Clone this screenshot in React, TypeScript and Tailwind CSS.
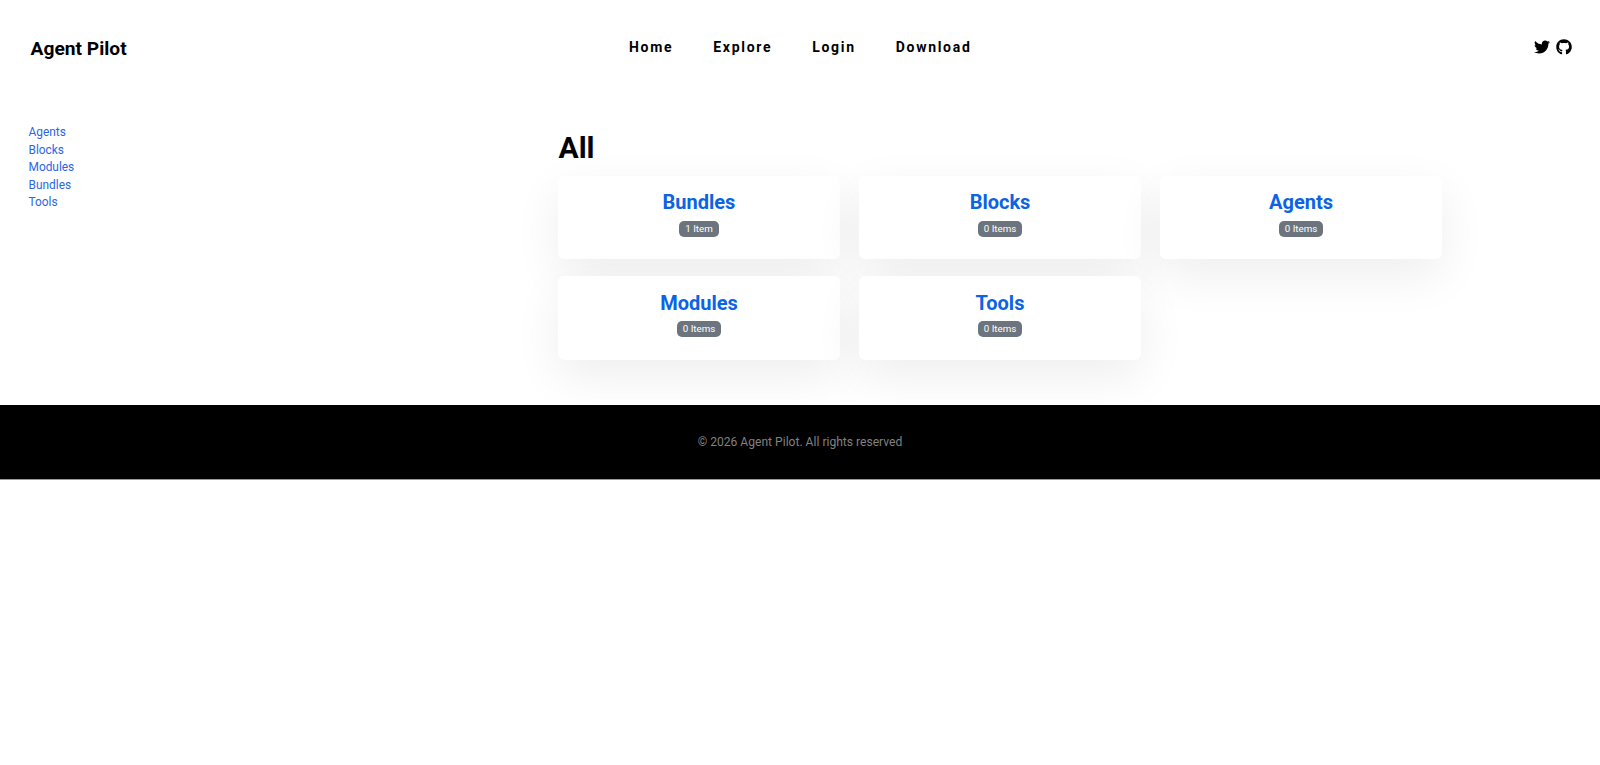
import React from 'react';
import { FaTwitter, FaGithub } from 'react-icons/fa';

const navLinks = ['Home', 'Explore', 'Login', 'Download'];
const sideLinks = ['Agents', 'Blocks', 'Modules', 'Bundles', 'Tools'];
const categories = [
  { name: 'Bundles', count: '1 Item' },
  { name: 'Blocks', count: '0 Items' },
  { name: 'Agents', count: '0 Items' },
  { name: 'Modules', count: '0 Items' },
  { name: 'Tools', count: '0 Items' },
];

const App: React.FC = () => {
  return (
    <div className="min-h-[765px] bg-white font-['Roboto',sans-serif] text-black">
      <header className="relative flex h-[95px] items-center justify-between pl-[30.6px] pr-[28px]">
        <a className="text-[19.2px] font-bold leading-[24px] mt-[2px]">Agent Pilot</a>
        <nav className="absolute left-[629px] top-[38px] flex gap-[40px]">
          {navLinks.map((link) => (
            <a key={link} className="text-[14px] font-bold leading-[18px] tracking-[1.7px]">
              {link}
            </a>
          ))}
        </nav>
        <div className="flex items-center gap-[6px] mt-[-2px]">
          <FaTwitter size={16} />
          <FaGithub size={16} />
        </div>
      </header>

      <div className="flex h-[310px]">
        <aside className="w-[558px] shrink-0 pl-[28.5px] pt-[29px]">
          {sideLinks.map((link) => (
            <a key={link} className="block text-[11.9px] leading-[17.5px] text-[#2b66e8]">
              {link}
            </a>
          ))}
        </aside>
        <main className="w-[884px] pt-[34px]">
          <h1 className="pl-[0.5px] text-[30px] font-bold leading-[38px] mb-[8.6px]">All</h1>
          <div className="grid grid-cols-3 gap-x-[19px] gap-y-[16.8px]">
            {categories.map((cat) => (
              <div
                key={cat.name}
                className="flex h-[83.7px] flex-col items-center rounded-[6px] bg-white pt-[13.6px] shadow-[0_16px_48px_rgba(0,0,0,0.07)]"
              >
                <h2 className="text-[20px] font-bold leading-[26px] text-[#0b63e5]">{cat.name}</h2>
                <span className="mt-[5.7px] rounded-[5px] bg-[#6c757d] px-[6px] py-[3px] text-[9.75px] font-normal leading-[10px] text-white">
                  {cat.count}
                </span>
              </div>
            ))}
          </div>
        </main>
      </div>

      <footer className="flex h-[75px] items-center justify-center border-b border-[#999] bg-black">
        <p className="text-[12.1px] text-[#808080]">© 2026 Agent Pilot. All rights reserved</p>
      </footer>
    </div>
  );
};

export default App;
